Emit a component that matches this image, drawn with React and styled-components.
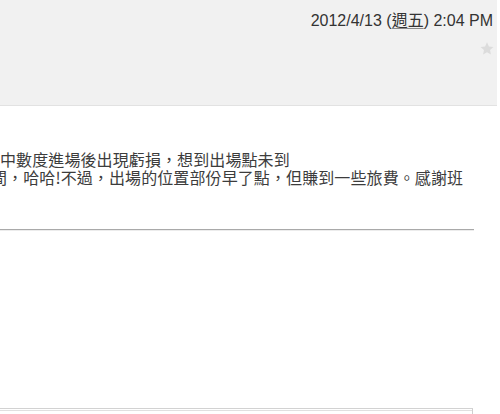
import React from "react";
import styled, { createGlobalStyle } from "styled-components";

const Global = createGlobalStyle`
  html, body { margin: 0; padding: 0; background: #ffffff; overflow: hidden; }
  body { width: 500px; height: 414px; }
`;

const Page = styled.div`
  width: 500px;
  height: 414px;
  overflow: hidden;
  display: flex;
  flex-direction: column;
`;

const Header = styled.header`
  width: 497px;
  height: 106px;
  box-sizing: border-box;
  background: #f1f1f1;
  border-bottom: 1px solid #e2e2e2;
  padding: 12px 4px 0 0;
  display: flex;
  flex-direction: column;
  align-items: flex-end;
`;

const DateLine = styled.div`
  font-family: "Liberation Sans", "Noto Sans CJK TC", sans-serif;
  font-size: 16px;
  line-height: 18px;
  color: #333333;
  white-space: nowrap;
`;

const Weekday = styled.span`
  text-decoration: underline;
  text-decoration-color: #8a8a8a;
  text-underline-offset: 2px;
`;

const StarButton = styled.div`
  margin-top: 12px;
  margin-right: -1px;
  width: 14px;
  height: 13px;
  display: flex;
`;

const Body = styled.section`
  padding-top: 44px;
  display: flex;
  flex-direction: column;
`;

const Line = styled.div`
  font-family: "Noto Sans CJK TC", "Noto Sans CJK SC", sans-serif;
  font-size: 16px;
  line-height: 18px;
  color: #3c3c3c;
  white-space: nowrap;
  margin-left: ${(p) => p.$shift || 0}px;
  letter-spacing: 0.1px;
`;

const Divider = styled.div`
  margin-top: 43px;
  width: 474px;
  height: 1px;
  background: #a9a9a9;
  border-bottom: 1px solid #ececec;
`;

const Spacer = styled.div`
  flex: 1;
`;

const BottomBox = styled.div`
  width: 473px;
  height: 6px;
  box-sizing: border-box;
  border-top: 1px solid #d2d2d2;
  border-right: 1px solid #cfcfcf;
  padding-top: 1px;
  margin-bottom: 0;
`;

const InnerEdge = styled.div`
  height: 1px;
  background: #e0e0e0;
`;

export default function App() {
  return (
    <>
      <Global />
      <Page>
        <Header>
          <DateLine>
            2012/4/13 (<Weekday>週五</Weekday>) 2:04 PM
          </DateLine>
          <StarButton>
            <svg width="14" height="13" viewBox="0 0 24 23">
              <path
                d="M12 0.5l3.4 7.3 7.9 0.9-5.9 5.4 1.6 7.8L12 18l-7 3.9 1.6-7.8L0.7 8.7l7.9-0.9z"
                fill="#dcdcdc"
              />
            </svg>
          </StarButton>
        </Header>
        <Body>
          <Line>中數度進場後出現虧損，想到出場點未到</Line>
          <Line $shift={-9}>間，哈哈!不過，出場的位置部份早了點，但賺到一些旅費。感謝班</Line>
          <Divider />
        </Body>
        <Spacer />
        <BottomBox>
          <InnerEdge />
        </BottomBox>
      </Page>
    </>
  );
}
